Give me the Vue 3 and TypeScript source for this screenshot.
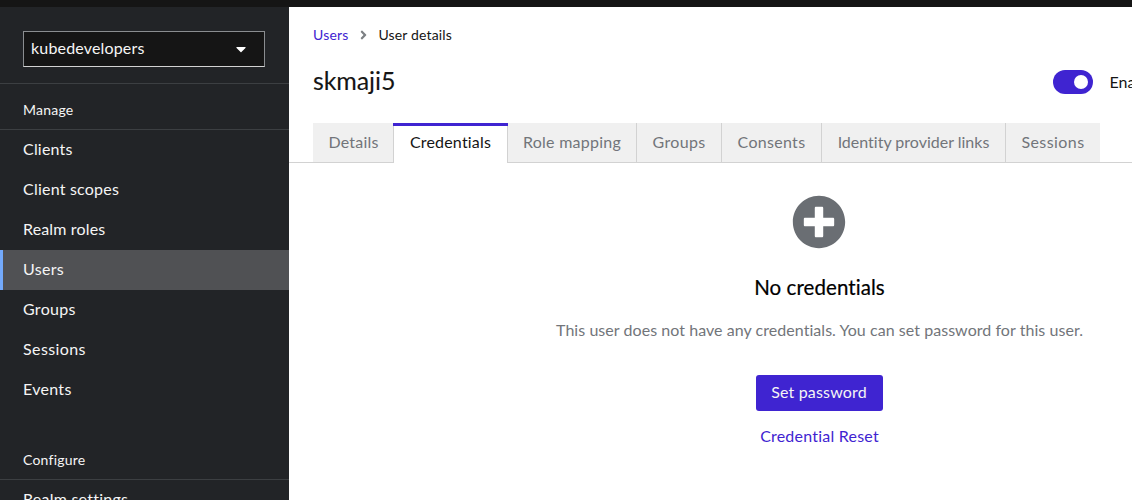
<script setup lang="ts">
interface Item { label: string; spacing: number; active?: boolean }
interface Tab extends Item { width: number }

const manage: Item[] = [
  { label: 'Clients', spacing: 0.2 },
  { label: 'Client scopes', spacing: 0.22 },
  { label: 'Realm roles', spacing: 0.15 },
  { label: 'Users', spacing: 0.3, active: true },
  { label: 'Groups', spacing: 0.3 },
  { label: 'Sessions', spacing: 0.4 },
  { label: 'Events', spacing: 0.3 },
]
const configure: Item[] = [{ label: 'Realm settings', spacing: 0.25 }]
const tabs: Tab[] = [
  { label: 'Details', spacing: 0.2, width: 80 },
  { label: 'Credentials', spacing: 0.2, width: 115, active: true },
  { label: 'Role mapping', spacing: 0.24, width: 129 },
  { label: 'Groups', spacing: 0.34, width: 85 },
  { label: 'Consents', spacing: 0.3, width: 100 },
  { label: 'Identity provider links', spacing: 0, width: 184 },
  { label: 'Sessions', spacing: 0.42, width: 94 },
]
const track = (n: number) => ({ letterSpacing: `${n}px` })
</script>

<template>
  <div class="page">
    <header class="masthead"></header>
    <div class="body">
      <aside class="sidebar">
        <div class="realm">
          <button class="realm-select" type="button">
            <span class="realm-name">kubedevelopers</span>
            <svg class="caret" viewBox="0 0 320 512"><path fill="#fff" d="M31.3 192h257.3c17.8 0 26.7 21.5 14.1 34.1L174.1 354.7c-7.8 7.8-20.5 7.8-28.3 0L17.2 226.1C4.6 213.5 13.5 192 31.3 192z" /></svg>
          </button>
        </div>
        <nav class="group">
          <h2 class="group-title">Manage</h2>
          <a v-for="i in manage" :key="i.label" class="nav-link" :class="{ current: i.active }"><span :style="track(i.spacing)">{{ i.label }}</span></a>
        </nav>
        <nav class="group second">
          <h2 class="group-title">Configure</h2>
          <a v-for="i in configure" :key="i.label" class="nav-link"><span :style="track(i.spacing)">{{ i.label }}</span></a>
        </nav>
      </aside>
      <main class="main">
        <div class="breadcrumb">
          <a class="crumb-link">Users</a>
          <svg class="chevron" viewBox="0 0 256 512"><path fill="#7d8084" d="M224.3 273l-136 136c-9.4 9.4-24.6 9.4-33.9 0l-22.6-22.6c-9.4-9.4-9.4-24.6 0-33.9l96.4-96.4-96.4-96.4c-9.4-9.4-9.4-24.6 0-33.9L54.3 103c9.4-9.4 24.6-9.4 33.9 0l136 136c9.5 9.4 9.5 24.6.1 34z" /></svg>
          <span class="crumb-current">User details</span>
        </div>
        <div class="title-row">
          <h1 class="title">skmaji5</h1>
          <div class="toggle-group">
            <span class="switch"><span class="knob"></span></span>
            <span class="toggle-label">Enabled</span>
          </div>
        </div>
        <div class="tabs">
          <button v-for="t in tabs" :key="t.label" type="button" class="tab" :class="{ selected: t.active }" :style="{ width: `${t.width}px` }"><span :style="track(t.spacing)">{{ t.label }}</span></button>
        </div>
        <section class="empty">
          <svg class="plus" viewBox="0 0 512 512"><path fill="#6a6e73" d="M256 8C119 8 8 119 8 256s111 248 248 248 248-111 248-248S393 8 256 8zm144 276c0 6.600-5.400 12-12 12h-92v92c0 6.600-5.400 12-12 12h-56c-6.600 0-12-5.400-12-12v-92h-92c-6.600 0-12-5.400-12-12v-56c0-6.600 5.400-12 12-12h92v-92c0-6.600 5.400-12 12-12h56c6.600 0 12 5.400 12 12v92h92c6.600 0 12 5.400 12 12v56z" /></svg>
          <h2 class="empty-title">No credentials</h2>
          <p class="empty-text">This user does not have any credentials. You can set password for this user.</p>
          <button class="primary" type="button"><span>Set password</span></button>
          <a class="reset">Credential Reset</a>
        </section>
      </main>
    </div>
  </div>
</template>

<style>
body { margin: 0; overflow: hidden; }
</style>

<style scoped>
.page { width: 1132px; height: 500px; overflow: hidden; background: #fff; font: 400 16px/24px Lato, "Liberation Sans", sans-serif; font-variant-ligatures: none; color: #151515; white-space: nowrap; }
.page * { box-sizing: border-box; }
h1, h2, p { margin: 0; font-weight: 400; }
button { font: inherit; font-variant-ligatures: none; border: 0; padding: 0; }
.masthead { height: 7px; background: #151515; }
.body { display: flex; height: 493px; overflow: hidden; }
.sidebar { flex: 0 0 289px; background: #222427; color: #f5f5f5; overflow: hidden; }
.realm { height: 77px; padding: 24px 24px 0 23px; border-bottom: 1px solid #3c3f42; }
.realm-select { width: 242px; height: 36px; display: flex; align-items: center; justify-content: space-between; padding: 0 18px 0 7px; background: #151515; color: #f5f5f5; border: 1px solid #8a8d90; border-bottom-color: #d2d2d2; }
.realm-name { padding-bottom: 2px; letter-spacing: .17px; }
.caret { width: 10px; height: 16px; margin-bottom: 1px; }
.group-title { height: 46px; padding: 14px 0 0 23px; font-size: 14px; line-height: 24px; letter-spacing: .22px; border-bottom: 1px solid #3c3f42; }
.second { margin-top: 24px; }
.nav-link { display: flex; align-items: center; height: 40px; padding: 0 0 2px 23px; }
.current { background: #505154; box-shadow: inset 3px 0 #73a9fb; }
.main { flex: 0 0 1060px; }
.breadcrumb { display: flex; align-items: center; height: 38px; padding: 17px 0 0 24px; font-size: 14px; line-height: 20px; }
.crumb-link { width: 36px; color: #3f24d1; letter-spacing: .2px; }
.chevron { width: 7px; height: 14px; margin: 0 12px 0 10.500px; }
.crumb-current { letter-spacing: .15px; }
.title-row { display: flex; align-items: center; height: 36px; margin-top: 19px; padding-left: 24px; }
.title { width: 740px; padding-bottom: 4px; font-size: 25px; line-height: 32px; letter-spacing: -.1px; -webkit-text-stroke: .1px #151515; }
.toggle-group { display: flex; align-items: center; gap: 16.500px; }
.toggle-label { padding-bottom: 1px; }
.switch { width: 40px; height: 24px; padding: 5px 5px 5px 21px; border-radius: 12px; background: #3f24d1; }
.knob { display: block; width: 14px; height: 14px; border-radius: 50%; background: #fff; }
.tabs { display: flex; height: 40px; margin-top: 23px; padding-left: 24px; border-bottom: 1px solid #d2d2d2; }
.tab { height: 39px; background: #f0f0f0; color: #72757a; border-right: 1px solid #d2d2d2; padding-bottom: 2px; }
.tab:first-child { border-right: 0; padding-left: 1px; }
.tab:last-child { border-right: 0; }
.selected { height: 40px; background: linear-gradient(90deg, #d2d2d2 1px, #fff 1px, #fff calc(100% - 1px), #d2d2d2 calc(100% - 1px)); color: #151515; border-right: 0; border-top: 3px solid #3f24d1; padding-bottom: 6px; }
.empty { display: flex; flex-direction: column; align-items: center; padding-top: 32px; }
.plus { width: 54px; height: 54px; }
.empty-title { margin-top: 22px; font-size: 20.500px; line-height: 32px; letter-spacing: .07px; padding-left: 1px; color: #000; -webkit-text-stroke: .2px #000; }
.empty-text { margin-top: 15px; padding-left: 1px; color: #72757a; letter-spacing: .05px; }
.primary { width: 127px; height: 36px; margin-top: 33px; padding-bottom: 2px; border-radius: 3px; background: #3f24d1; color: #f5f5f5; letter-spacing: .17px; }
.reset { margin-top: 13px; padding-left: 1px; color: #3f24d1; letter-spacing: .22px; }
</style>
